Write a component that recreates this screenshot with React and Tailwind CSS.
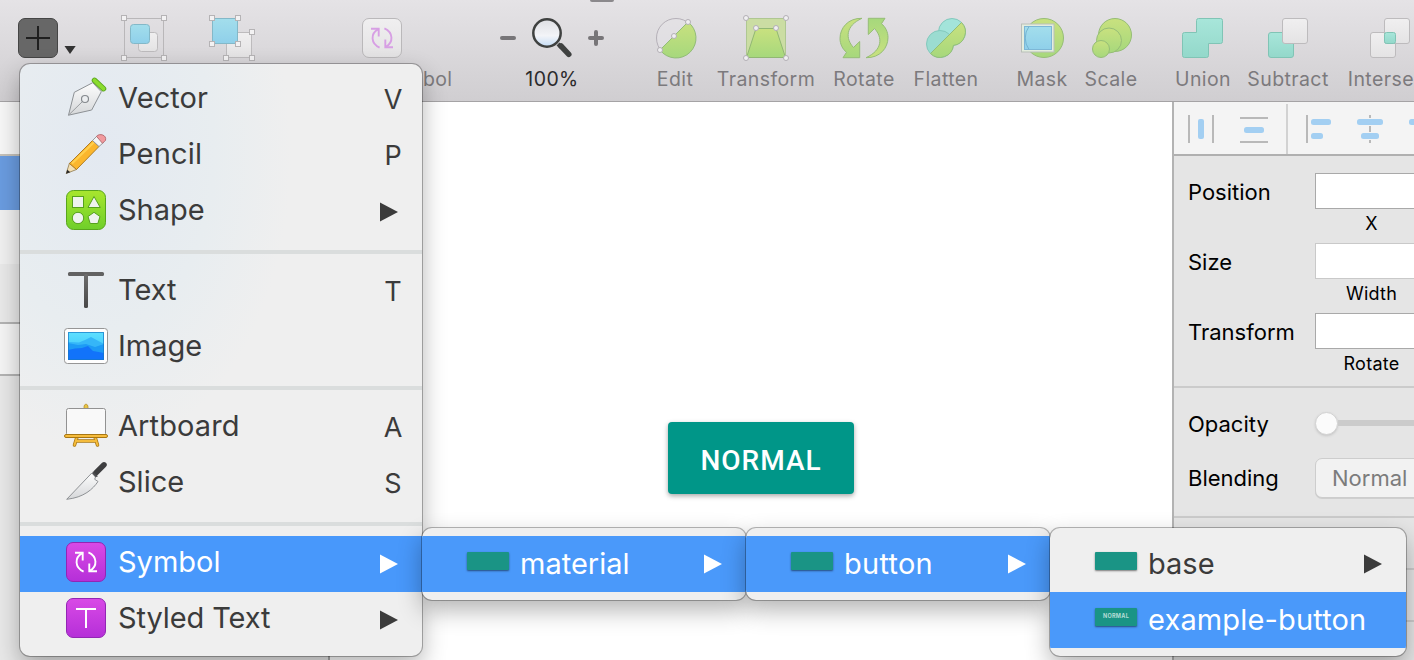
import React from "react";

/* Toolbar icons use a coordinate system whose x origin is the icon centre. */
function ToolIcon({ children }) {
  return (
    <svg viewBox="-24 14 48 48" className="block h-12 w-12 shrink-0 overflow-visible">
      {children}
    </svg>
  );
}

function Tool({ label, className, labelClass = "text-[#7c7a7d]", children }) {
  return (
    <div className={`flex shrink-0 flex-col items-center pt-3.5 ${className}`}>
      <ToolIcon>{children}</ToolIcon>
      {label && <span className={`mt-1 whitespace-nowrap text-[19.5px] leading-[26px] tracking-[0.4px] ${labelClass}`}>{label}</span>}
    </div>
  );
}

function Handle({ x, y }) {
  return <rect x={x - 2.5} y={y - 2.5} width="5" height="5" fill="#f3f2f3" stroke="#b5b3b5" strokeWidth="1" />;
}

function Dot({ x, y }) {
  return <circle cx={x} cy={y} r="2.5" fill="#f0eff1" stroke="#b3afb5" strokeWidth="1" />;
}

function SymbolGlyph({ color, cy = 0 }) {
  return (
    <g transform={`translate(0 ${cy})`} fill="none" stroke={color} strokeWidth="1.9">
      <path d="M-11 -9.2H-3.3V-1.5" />
      <path d="M-4 -8.6C-11.5 -4.5 -11.5 5.5 -2.4 9.6" />
      <path d="M11 9.2H3.3V1.5" />
      <path d="M4 8.6C11.5 4.5 11.5 -5.5 2.4 -9.6" />
    </g>
  );
}

function Gradients() {
  return (
    <svg className="absolute h-0 w-0">
      <defs>
        <linearGradient id="lime" x1="0" y1="0" x2="0" y2="1">
          <stop offset="0" stopColor="#c9e17f" />
          <stop offset="1" stopColor="#a6d87c" />
        </linearGradient>
        <linearGradient id="mint" x1="0" y1="0" x2="0" y2="1">
          <stop offset="0" stopColor="#a8e6da" />
          <stop offset="1" stopColor="#93d8ca" />
        </linearGradient>
        <linearGradient id="sky" x1="0" y1="0" x2="0" y2="1">
          <stop offset="0" stopColor="#a3deec" />
          <stop offset="1" stopColor="#8fd0ea" />
        </linearGradient>
        <linearGradient id="paper" x1="0" y1="0" x2="0" y2="1">
          <stop offset="0" stopColor="#f0eff0" />
          <stop offset="1" stopColor="#e4e3e4" />
        </linearGradient>
        <linearGradient id="purple" x1="0" y1="0" x2="0" y2="1">
          <stop offset="0" stopColor="#d94ae6" />
          <stop offset="1" stopColor="#b52fd8" />
        </linearGradient>
        <linearGradient id="green" x1="0" y1="0" x2="0" y2="1">
          <stop offset="0" stopColor="#a8e62e" />
          <stop offset="1" stopColor="#6fcf2a" />
        </linearGradient>
        <linearGradient id="metal" x1="0" y1="0" x2="0" y2="1">
          <stop offset="0" stopColor="#fdfdfd" />
          <stop offset="1" stopColor="#d5d7d9" />
        </linearGradient>
        <linearGradient id="lens" x1="0" y1="0" x2="0" y2="1">
          <stop offset="0" stopColor="#dedfe3" />
          <stop offset="0.6" stopColor="#f3f4f8" />
          <stop offset="1" stopColor="#c4dcf6" />
        </linearGradient>
        <linearGradient id="ink" x1="0" y1="0" x2="0" y2="1">
          <stop offset="0" stopColor="#6d6d6d" />
          <stop offset="1" stopColor="#484848" />
        </linearGradient>
        <linearGradient id="sea" x1="0" y1="0" x2="0" y2="1">
          <stop offset="0" stopColor="#5fe0ff" />
          <stop offset="1" stopColor="#33bdf8" />
        </linearGradient>
      </defs>
    </svg>
  );
}

function Toolbar() {
  const blade = "M-2 18.3C-16 18-24 28-24 38.500C-24 44-21.500 49-17.500 52.300L-21 57.700H-4.300V41.500L-10.500 47.500C-18.500 39-19 26-2 18.300Z";
  return (
    <header className="flex h-[102px] w-[1444px] shrink-0 border-b border-[#a5a3a5] bg-linear-to-b from-[#e5e3e6] to-[#d0ced1]">
      <div className="w-[100px] shrink-0 pl-3.5 pt-3.5">
        <svg viewBox="14 14 72 48" className="block h-12 w-[72px]">
          <rect x="18.500" y="18.500" width="39" height="39" rx="6.500" fill="#676767" stroke="#454545" />
          <path d="M26 38H50M38 26V50" stroke="#1f1f1f" strokeWidth="2" />
          <path d="M64.500 46H75.700L70 54Z" fill="#333" />
        </svg>
      </div>
      <Tool className="w-[88px]">
        <rect x="-19.500" y="18.500" width="39" height="39" fill="none" stroke="#b9b7b9" />
        <rect x="-5.500" y="32.500" width="19" height="19" rx="3" fill="url(#paper)" stroke="#bdbbbd" />
        <rect x="-13.500" y="24.500" width="19" height="19" rx="3" fill="url(#sky)" stroke="#83b8c8" />
        <Handle x={-20} y={18} /><Handle x={20} y={18} /><Handle x={-20} y={58} /><Handle x={20} y={58} />
      </Tool>
      <Tool className="w-[88px]">
        <rect x="-5.500" y="32.500" width="25" height="25" fill="url(#paper)" stroke="#bdbbbd" />
        <rect x="-19.500" y="18.500" width="25" height="25" fill="url(#sky)" stroke="#83b8c8" />
        <Handle x={-20} y={18} /><Handle x={6} y={18} /><Handle x={-20} y={44} /><Handle x={6} y={44} />
        <Handle x={20} y={32} /><Handle x={20} y={58} /><Handle x={-6} y={58} />
      </Tool>
      <Tool label="Create Symbol" className="w-[212px]">
        <rect x="-19.500" y="18.500" width="39" height="39" rx="6.500" fill="url(#paper)" stroke="#bab8ba" />
        <SymbolGlyph color="#d79fe4" cy={38} />
      </Tool>
      <Tool label="100%" className="w-32" labelClass="text-[#2b2a2c]">
        <path d="M-50 38H-38" stroke="#777578" strokeWidth="4" strokeLinecap="round" />
        <path d="M38 38H50M44 32V44" stroke="#777578" strokeWidth="4" strokeLinecap="round" />
        <path d="M6 44L9 47" stroke="#3f4140" strokeWidth="4" />
        <path d="M9 46L16.800 54.300" stroke="#3f4140" strokeWidth="5.500" strokeLinecap="round" />
        <circle cx="-5" cy="33" r="13.700" fill="url(#lens)" stroke="#3f4140" strokeWidth="2.500" />
      </Tool>
      <Tool label="Edit" className="ml-5 w-[78px]">
        <circle cx="1" cy="38" r="19.500" fill="#e6e4e8" fillOpacity=".5" stroke="#b5b0b8" />
        <path d="M-15 50L13 22A20 20 0 1 1-15 50Z" fill="url(#lime)" stroke="#93bd79" />
        <Dot x={-15} y={50} /><Dot x={-1} y={36} /><Dot x={13} y={22} />
      </Tool>
      <Tool label="Transform" className="w-[104px]">
        <rect x="-19.500" y="18.500" width="39" height="39" fill="#cbdda3" stroke="#afc792" />
        <path d="M-10 28.500H10L19.500 57.500H-19.500Z" fill="url(#lime)" stroke="#91b774" />
        <Dot x={-20} y={18} /><Dot x={20} y={18} /><Dot x={-20} y={58} /><Dot x={20} y={58} />
        <Dot x={-10} y={28} /><Dot x={10} y={28} />
      </Tool>
      <Tool label="Rotate" className="w-[92px]">
        <path d={blade} fill="url(#lime)" stroke="#96bd77" />
        <path d={blade} transform="rotate(180 0 38)" fill="url(#lime)" stroke="#96bd77" />
      </Tool>
      <Tool label="Flatten" className="w-[72px]">
        <circle cx="6" cy="32" r="13.500" fill="#a3e4da" stroke="#83c9bd" />
        <circle cx="-6" cy="44" r="13.500" fill="#9bdcd1" stroke="#83c9bd" />
        <path d="M-15.500 53.500L15.500 22.500A13.500 13.500 0 0 1 7.400 45.400A13.500 13.500 0 0 1-15.500 53.500Z" fill="url(#lime)" stroke="#93bd79" />
      </Tool>
      <Tool label="Mask" className="ml-7 w-16">
        <circle cx="2" cy="38" r="19.500" fill="url(#lime)" stroke="#96bd77" />
        <rect x="-20.500" y="24" width="32.500" height="28" fill="#e4edde" stroke="#b9bfb9" />
        <rect x="-17.500" y="26.500" width="27" height="23" fill="url(#sky)" stroke="#7db7d6" />
        <path d="M-13 26.500A19.500 19.500 0 0 0-13 49.500" fill="none" stroke="#74b4d2" />
      </Tool>
      <Tool label="Scale" className="w-[74px]">
        <circle cx="4" cy="35" r="16.500" fill="url(#lime)" stroke="#96bd77" />
        <circle cx="-2" cy="40.500" r="12.500" fill="url(#lime)" stroke="#96bd77" />
        <circle cx="-10" cy="49" r="8.500" fill="url(#lime)" stroke="#96bd77" />
      </Tool>
      <Tool label="Union" className="ml-[18px] w-[74px]">
        <path d="M-6.500 20.500a2 2 0 0 1 2-2H17.500a2 2 0 0 1 2 2V41.500a2 2 0 0 1-2 2H5.500V55.500a2 2 0 0 1-2 2H-18.500a2 2 0 0 1-2-2V34.500a2 2 0 0 1 2-2H-6.500Z" fill="url(#mint)" stroke="#80c4b5" />
      </Tool>
      <Tool label="Subtract" className="w-24">
        <rect x="-19.500" y="32.500" width="25" height="25" rx="2.500" fill="url(#mint)" stroke="#80c4b5" />
        <rect x="-5.500" y="18.500" width="25" height="25" rx="2.500" fill="url(#paper)" stroke="#bdbbbd" />
      </Tool>
      <Tool label="Intersect" className="w-[108px]">
        <rect x="-19.500" y="32.500" width="25" height="25" rx="2.500" fill="url(#paper)" stroke="#bdbbbd" />
        <rect x="-5.500" y="18.500" width="25" height="25" rx="2.500" fill="url(#paper)" stroke="#bdbbbd" />
        <rect x="-5.500" y="32.500" width="11" height="11" rx="2" fill="url(#mint)" stroke="#80c4b5" />
      </Tool>
    </header>
  );
}

function Sidebar() {
  return (
    <aside className="flex w-[330px] shrink-0 flex-col border-r-2 border-[#a9a9a9] bg-[#e8e8e8]">
      <div className="h-[54px] border-b-2 border-[#c5c1b9] bg-[#f7f7f7]" />
      <div className="h-[54px] bg-[#6a9ce0]" />
      <div className="h-[54px] bg-[#f0f0f0]" />
      <div className="h-[60px] border-b-2 border-[#b3b3b3] bg-[#e9e9e9]" />
      <div className="h-[52px] border-b-2 border-[#b3b3b3] bg-[#f5f5f5]" />
    </aside>
  );
}

function Field({ label, caption, dark }) {
  return (
    <div className="flex h-[70px] items-start pl-3.5">
      <span className="w-[127px] shrink-0 pt-1 text-[22px] leading-[30px]">{label}</span>
      <div className="flex w-[113px] shrink-0 flex-col items-center">
        <div className={`h-9 w-full border bg-white ${dark ? "border-[#a9a9a9]" : "border-[#c9c9c9]"}`} />
        <span className="mt-0.5 text-[18px] leading-[26px] tracking-[0.25px]">{caption}</span>
      </div>
    </div>
  );
}

function Inspector() {
  return (
    <aside className="w-[242px] shrink-0 overflow-hidden border-l-2 border-[#b3b3b3] bg-[#e5e5e5] text-black">
      <div className="h-[54px] border-b-2 border-[#b0b0b0] bg-[#f4f4f4]">
        <svg viewBox="1174 102 240 52" className="block h-[52px] w-60">
          <path d="M1189 115V143M1213 115V143M1240 118H1268M1240 142H1268M1307 115V143" stroke="#b9b9b9" strokeWidth="2" />
          <path d="M1287 104V154" stroke="#d2d2d2" strokeWidth="2" />
          <path d="M1370 115V118M1370 126V132M1370 140V143" stroke="#b9b9b9" strokeWidth="2" />
          <g fill="#a3cff2">
            <rect x="1198" y="119" width="6" height="20" rx="2" />
            <rect x="1244" y="127" width="20" height="6" rx="2.500" />
            <rect x="1311" y="119" width="20" height="6" rx="2.500" />
            <rect x="1311" y="133" width="12" height="6" rx="2.500" />
            <rect x="1357" y="119" width="26" height="6" rx="2.500" />
            <rect x="1361" y="133" width="18" height="6" rx="2.500" />
            <rect x="1409" y="119" width="20" height="6" rx="2.500" />
          </g>
        </svg>
      </div>
      <div className="h-[232px] border-b-2 border-[#cbcbcb] pt-[17px]">
        <Field label="Position" caption="X" dark />
        <Field label="Size" caption="Width" />
        <Field label="Transform" caption="Rotate" dark />
      </div>
      <div className="h-[130px] border-b-2 border-[#cbcbcb] pl-3.5 pt-4">
        <div className="flex h-10 items-center">
          <span className="w-[127px] shrink-0 text-[22px] leading-[30px]">Opacity</span>
          <div className="flex shrink-0 items-center pb-0.5">
            <div className="h-[23px] w-[23px] rounded-full border border-[#d2d2d2] bg-[#fbfbfb] shadow-sm" />
            <div className="h-1.5 w-24 bg-[#cbcbcb]" />
          </div>
        </div>
        <div className="mt-3.5 flex h-10 items-center">
          <span className="w-[127px] shrink-0 text-[22px] leading-[30px]">Blending</span>
          <div className="flex h-10 w-32 shrink-0 items-center rounded-[7px] border border-[#cdcdcd] bg-[#f2f2f2] pl-4 text-[22px] text-[#7c7c7c] shadow-[0_1px_0_#cfcfcf]">Normal</div>
        </div>
      </div>
      <div className="h-[52px] border-b-2 border-[#cbcbcb]" />
      <div className="h-[52px] border-b-2 border-[#cbcbcb]" />
    </aside>
  );
}

function Submark({ light }) {
  return (
    <svg viewBox="0 0 18 20" className="h-5 w-[18px] shrink-0">
      <path d="M0 0.500L18 10L0 19.500Z" fill={light ? "#fff" : "#3b3b3b"} />
    </svg>
  );
}

/* Menu icons are drawn on a 44 x 44 grid. */
function MenuIcon({ children }) {
  return <svg viewBox="0 0 44 44" className="h-11 w-11 shrink-0 overflow-visible">{children}</svg>;
}

function VectorIcon() {
  return (
    <MenuIcon>
      <path d="M4.500 39.200L10.300 16.300L28.700 6.700L37.300 15.700L27.700 34Z" fill="url(#metal)" stroke="#8d9195" strokeLinejoin="round" />
      <path d="M4.500 39.200L18.500 25.500" stroke="#9a9da0" />
      <circle cx="21" cy="23" r="3.500" fill="#eceef0" stroke="#85898d" strokeWidth="1.200" />
      <path d="M30.500 4.300L39.500 12.700" stroke="#5aa51e" strokeWidth="5.500" strokeLinecap="round" />
      <path d="M30.500 4.300L39.500 12.700" stroke="#8bdc2e" strokeWidth="3.700" strokeLinecap="round" />
    </MenuIcon>
  );
}

function PencilIcon() {
  return (
    <MenuIcon>
      <path d="M2.200 41.500L5.500 31L12.500 37.500Z" fill="#f3dfb4" stroke="#8f7a4c" strokeWidth=".8" />
      <path d="M2 41.700L3.300 37.800L6.300 40.300Z" fill="#2b2b2b" />
      <path d="M5.500 31.500L28.500 8.500L35 14.500L12.500 37.500Z" fill="#fbb62d" stroke="#a8741a" strokeWidth=".9" />
      <path d="M8 31.500L30 10.300" stroke="#ffcf4e" strokeWidth="2" />
      <path d="M28.500 8.500L33 4L39.500 10.500L35 14.500Z" fill="#f2f3f4" stroke="#8f9295" strokeWidth=".9" />
      <path d="M32.500 4.300C35.500 .800 43 3 41.500 8.300L38.500 11.300Z" fill="#f19a9e" stroke="#b0696e" strokeWidth=".9" />
    </MenuIcon>
  );
}

function ShapeIcon() {
  return (
    <MenuIcon>
      <rect x="2.500" y="2.500" width="39" height="39" rx="7" fill="url(#green)" stroke="#59a51d" />
      <g fill="#eef3ee" stroke="#56a11d">
        <rect x="8.500" y="8.500" width="11" height="11" />
        <path d="M30 8.500L36.300 19.500H24Z" />
        <circle cx="14" cy="30" r="5.700" />
        <path d="M30 24.300L36 28.500L33.800 35.500H26.200L24 28.500Z" />
      </g>
    </MenuIcon>
  );
}

function TextIcon() {
  return (
    <MenuIcon>
      <rect x="4" y="4" width="36" height="4" rx="1.500" fill="#626262" />
      <rect x="20" y="6" width="4" height="34" rx="1.500" fill="url(#ink)" />
    </MenuIcon>
  );
}

function ImageIcon() {
  return (
    <MenuIcon>
      <rect x="0.500" y="4.500" width="43" height="35" rx="3" fill="#fefefe" stroke="#969696" />
      <rect x="4" y="8" width="36" height="28" fill="url(#sea)" />
      <path d="M4 18L15 18.500L21 16L27 13L40 20V36H4Z" fill="#35b6f8" />
      <path d="M4 19L14 21L22 20L31 23L40 20V36H4Z" fill="#1d9bf5" />
      <path d="M4 26L11 24.500L18 24L24 22L29 27L40 29V36H4Z" fill="#1273fa" />
      <rect x="4.500" y="8.500" width="35" height="27" fill="none" stroke="#1577c6" strokeOpacity=".7" />
    </MenuIcon>
  );
}

function ArtboardIcon() {
  return (
    <MenuIcon>
      <g transform="translate(0 -2)">
        <path d="M20 5.500C20 1 24 1 24 5.500V8H20Z" fill="#e8c545" stroke="#b58a1e" strokeWidth=".8" />
        <rect x="2.500" y="6.500" width="39" height="27" rx="2" fill="#f9f9f9" stroke="#929292" />
        <path d="M13 35L10.500 43M31 35L33.500 43M12 39H32" stroke="#a87713" strokeWidth="3.500" strokeLinecap="round" />
        <path d="M13 35L10.500 43M31 35L33.500 43M12 39H32" stroke="#f4bb3b" strokeWidth="2" strokeLinecap="round" />
        <rect x="0.500" y="32.500" width="43" height="3" rx="1.500" fill="#f6bc3d" stroke="#a87713" />
      </g>
    </MenuIcon>
  );
}

function SliceIcon() {
  return (
    <MenuIcon>
      <path d="M2.700 39.300L27.800 13L31.500 17L30.700 19.300L34 21.500C29 29 20 37.500 2.700 39.300Z" fill="url(#metal)" stroke="#8f9295" strokeLinejoin="round" />
      <path d="M32 12.800L40 4.800" stroke="#3e3e40" strokeWidth="5.500" strokeLinecap="round" />
      <path d="M29 11.500L34 16.200L31.700 17.300L28.200 13.200Z" fill="#4d4d50" />
    </MenuIcon>
  );
}

function SymbolIcon() {
  return (
    <MenuIcon>
      <rect x="2.500" y="2.500" width="39" height="39" rx="6.500" fill="url(#purple)" stroke="#9226b4" />
      <g transform="translate(22 0)"><SymbolGlyph color="#fff" cy={22} /></g>
    </MenuIcon>
  );
}

function StyledTextIcon() {
  return (
    <MenuIcon>
      <rect x="2.500" y="2.500" width="39" height="39" rx="6.500" fill="url(#purple)" stroke="#9226b4" />
      <path d="M12 13H32M22 13V32" stroke="#fff" strokeWidth="2" />
    </MenuIcon>
  );
}

function MenuItem({ icon, label, labelClass = "", shortcut, submenu, active }) {
  return (
    <div className={`flex h-14 items-center pl-11 ${submenu ? "pr-6" : "pr-[17px]"} ${active ? "bg-[#4898fb] text-white" : ""}`}>
      <div className="-mt-1 flex items-center">
        {icon}
        <span className={`ml-2.5 whitespace-nowrap ${labelClass}`}>{label}</span>
      </div>
      <div className="ml-auto flex items-center">
        {shortcut && <span className="w-6 text-center text-[27px]">{shortcut}</span>}
        {submenu && <Submark light={active} />}
      </div>
    </div>
  );
}

function Separator() {
  return (
    <div className="flex h-6 items-center">
      <div className="h-1 w-full bg-[#dadddd]" />
    </div>
  );
}

function Thumb({ text }) {
  return (
    <div className="mb-1.5 flex h-[18px] w-[42px] shrink-0 items-center justify-center rounded-[1px] bg-[#1a9485] shadow-[0_1px_2px_rgba(0,0,0,0.5)]">
      {text && <span className="text-[5.500px] font-bold leading-none tracking-[0.3px] text-[#b5dcd6]">{text}</span>}
    </div>
  );
}

function SubItem({ label, labelClass = "", active, submenu, thumb }) {
  return (
    <div className={`flex h-14 items-center pl-[45px] pr-6 ${active ? "bg-[#4a99fa] text-white" : ""}`}>
      <Thumb text={thumb} />
      <span className={`ml-[11px] whitespace-nowrap ${labelClass}`}>{label}</span>
      {submenu && <span className="ml-auto"><Submark light={active} /></span>}
    </div>
  );
}

const shell =
  "absolute overflow-hidden rounded-[10px] py-2 text-[29px] leading-[34px] text-[#3b3b3b] shadow-[0_0_0_1px_rgba(0,0,0,0.28),0_10px_24px_rgba(0,0,0,0.3)]";

export default function App() {
  return (
    <div className="relative flex h-[660px] w-[1414px] flex-col overflow-hidden bg-white font-['Inter',sans-serif]">
      <Gradients />
      <Toolbar />
      <div className="absolute left-[590px] top-0 h-0.5 w-6 rounded-b bg-[#8b898c]" />
      <div className="flex min-h-0 flex-1">
        <Sidebar />
        <main className="min-w-0 flex-1 bg-white pl-[338px] pt-80">
          <button className="flex h-[72px] w-[186px] items-center justify-center rounded-[4px] bg-[#009688] pt-1.5 font-['Roboto',sans-serif] text-[28px] font-medium tracking-[1px] text-white shadow-[0_2px_5px_rgba(0,0,0,0.35)]">
            NORMAL
          </button>
        </main>
        <Inspector />
      </div>

      <div className={`${shell} left-5 top-16 h-[592px] w-[402px] bg-[#efefef] bg-[radial-gradient(ellipse_at_20%_15%,#e3e9f1_0%,#e8edf0_25%,#efefef_42%)]`}>
        <MenuItem icon={<VectorIcon />} label="Vector" labelClass="tracking-[0.1px]" shortcut="V" />
        <MenuItem icon={<PencilIcon />} label="Pencil" labelClass="tracking-[0.2px]" shortcut="P" />
        <MenuItem icon={<ShapeIcon />} label="Shape" submenu />
        <Separator />
        <MenuItem icon={<TextIcon />} label="Text" shortcut="T" />
        <MenuItem icon={<ImageIcon />} label="Image" />
        <Separator />
        <MenuItem icon={<ArtboardIcon />} label="Artboard" labelClass="tracking-[0.1px]" shortcut="A" />
        <MenuItem icon={<SliceIcon />} label="Slice" shortcut="S" />
        <Separator />
        <MenuItem icon={<SymbolIcon />} label="Symbol" submenu active />
        <MenuItem icon={<StyledTextIcon />} label="Styled Text" labelClass="tracking-[-0.1px]" submenu />
      </div>

      <div className={`${shell} left-[422px] top-[528px] h-[72px] w-[324px] bg-[#efefef]`}>
        <SubItem label="material" submenu active />
      </div>
      <div className={`${shell} left-[746px] top-[528px] h-[72px] w-[304px] bg-[#efefef]`}>
        <SubItem label="button" labelClass="tracking-[0.25px]" submenu active />
      </div>
      <div className={`${shell} left-[1050px] top-[528px] h-32 w-[356px] bg-[#efefef]`}>
        <SubItem label="base" submenu />
        <SubItem label="example-button" labelClass="tracking-[0.15px]" active thumb="NORMAL" />
      </div>
    </div>
  );
}
